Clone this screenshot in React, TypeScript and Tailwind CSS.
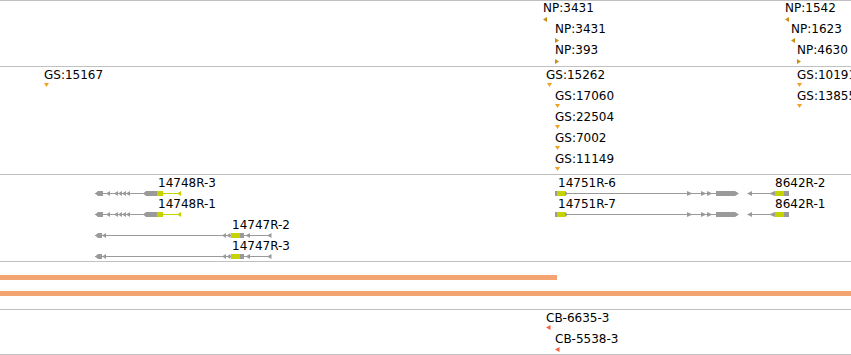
import React from "react";

const GRAY = "#9a9a9a";
const YEL = "#c5d300";
const NPC = "#c98e12";
const GSC = "#f2a322";
const CBC = "#f2623e";

type Lab = { x: number; b: number; t: string };

function Labels({ items, top }: { items: Lab[]; top: number }) {
  return (
    <>
      {items.map((l, i) => (
        <span
          key={i}
          className="absolute whitespace-nowrap text-[12px] leading-[14px] text-black font-['DejaVu_Sans',sans-serif]"
          style={{ left: l.x, top: l.b - 11 - (top + 1) }}
        >
          {l.t}
        </span>
      ))}
    </>
  );
}

function Canvas({ top, h, children }: { top: number; h: number; children: React.ReactNode }) {
  return (
    <svg
      className="absolute left-0 top-[-1px]"
      width={851}
      height={h}
      viewBox={`0 ${top} 851 ${h}`}
    >
      {children}
    </svg>
  );
}

const lt = (x: number, y: number, c: string, w = 4, h = 5) => (
  <polygon points={`${x},${y + h / 2} ${x + w},${y} ${x + w},${y + h}`} fill={c} />
);
const rt = (x: number, y: number, c: string, w = 4, h = 5) => (
  <polygon points={`${x},${y} ${x},${y + h} ${x + w},${y + h / 2}`} fill={c} />
);
const dt = (x: number, y: number, c: string) => (
  <polygon points={`${x},${y} ${x + 5},${y} ${x + 2.5},${y + 4}`} fill={c} />
);

function GeneA({ c }: { c: number }) {
  const t = c - 2.5;
  return (
    <g>
      <rect x={95} y={c - 0.5} width={62} height={1} fill={GRAY} />
      <polygon points={`95,${c} 98,${t} 103,${t} 103,${t + 5} 98,${t + 5}`} fill={GRAY} />
      {[106, 114, 118, 122, 126].map((x) => (
        <React.Fragment key={x}>{lt(x, t, GRAY, 4)}</React.Fragment>
      ))}
      <polygon points={`143,${c} 146,${t} 157,${t} 157,${t + 5} 146,${t + 5}`} fill={GRAY} />
      <rect x={157} y={t} width={6} height={5} fill={YEL} />
      <rect x={163} y={c - 0.5} width={18} height={1} fill={YEL} />
      {lt(177, t, YEL, 4)}
    </g>
  );
}

function GeneB({ c }: { c: number }) {
  const t = c - 2.5;
  return (
    <g>
      <rect x={95} y={c - 0.5} width={176} height={1} fill={GRAY} />
      <polygon points={`95,${c} 98,${t} 102,${t} 102,${t + 5} 98,${t + 5}`} fill={GRAY} />
      {lt(102, t, GRAY, 4)}
      {lt(222, t, GRAY, 4)}
      {lt(226.5, t, GRAY, 4)}
      <rect x={231} y={t} width={9} height={5} fill={YEL} />
      <rect x={240} y={t} width={4} height={5} fill={GRAY} />
      {lt(245.5, t, GRAY, 4.5)}
      {lt(267, t, GRAY, 4.5)}
    </g>
  );
}

function GeneC({ c }: { c: number }) {
  const t = c - 2.5;
  return (
    <g>
      <rect x={567} y={c - 0.5} width={150} height={1} fill={GRAY} />
      <rect x={555} y={t} width={2} height={5} fill={GRAY} />
      <rect x={557} y={t} width={8} height={5} fill={YEL} />
      {rt(565, t, GRAY, 3)}
      {rt(687, t, GRAY, 5.5)}
      {rt(701, t, GRAY, 5.5)}
      {rt(707, t, GRAY, 5.5)}
      <polygon points={`716,${t} 735,${t} 739,${c} 735,${t + 5} 716,${t + 5}`} fill={GRAY} />
      {lt(747, t, GRAY, 5)}
      <rect x={748} y={c - 0.5} width={27} height={1} fill={GRAY} />
      {lt(769, t, GRAY, 6)}
      <rect x={775} y={t} width={9} height={5} fill={YEL} />
      <rect x={784} y={t} width={5} height={5} fill={GRAY} />
    </g>
  );
}

export default function App() {
  const np: Lab[] = [
    { x: 543, b: 12, t: "NP:3431" },
    { x: 555, b: 33, t: "NP:3431" },
    { x: 555, b: 54, t: "NP:393" },
    { x: 785, b: 12, t: "NP:1542" },
    { x: 791, b: 33, t: "NP:1623" },
    { x: 797, b: 54, t: "NP:4630" },
  ];
  const gs: Lab[] = [
    { x: 44, b: 79, t: "GS:15167" },
    { x: 546, b: 79, t: "GS:15262" },
    { x: 555, b: 100, t: "GS:17060" },
    { x: 555, b: 121, t: "GS:22504" },
    { x: 555, b: 142, t: "GS:7002" },
    { x: 555, b: 163, t: "GS:11149" },
    { x: 797, b: 79, t: "GS:10191" },
    { x: 797, b: 100, t: "GS:13855" },
  ];
  const genes: Lab[] = [
    { x: 158, b: 187, t: "14748R-3" },
    { x: 158, b: 208, t: "14748R-1" },
    { x: 232, b: 229, t: "14747R-2" },
    { x: 232, b: 250, t: "14747R-3" },
    { x: 558, b: 187, t: "14751R-6" },
    { x: 558, b: 208, t: "14751R-7" },
    { x: 775, b: 187, t: "8642R-2" },
    { x: 775, b: 208, t: "8642R-1" },
  ];
  const cb: Lab[] = [
    { x: 546, b: 322, t: "CB-6635-3" },
    { x: 555, b: 343, t: "CB-5538-3" },
  ];

  return (
    <div className="w-[851px] h-[355px] overflow-hidden bg-white">
      <div className="relative h-[66px] border-t border-[#c0c0c0]">
        <Canvas top={0} h={66}>
          {lt(543, 17, NPC)}
          {rt(555, 38, NPC)}
          {rt(555, 59, NPC)}
          {lt(785, 17, NPC)}
          {lt(791, 38, NPC)}
          {rt(797, 59, NPC)}
        </Canvas>
        <Labels items={np} top={0} />
      </div>
      <div className="relative h-[108px] border-t border-[#c0c0c0]">
        <Canvas top={66} h={108}>
          {dt(44, 83, GSC)}
          {dt(547, 83, GSC)}
          {dt(555, 104, GSC)}
          {dt(555, 125, GSC)}
          {dt(555, 146, GSC)}
          {dt(555, 167, GSC)}
          {dt(797, 83, GSC)}
          {dt(797, 104, GSC)}
        </Canvas>
        <Labels items={gs} top={66} />
      </div>
      <div className="relative h-[87px] border-t border-[#c0c0c0]">
        <Canvas top={174} h={87}>
          <GeneA c={193.5} />
          <GeneA c={214.5} />
          <GeneB c={235.5} />
          <GeneB c={256.5} />
          <GeneC c={193.5} />
          <GeneC c={214.5} />
        </Canvas>
        <Labels items={genes} top={174} />
      </div>
      <div className="h-[48px] border-t border-[#c0c0c0] pt-[13px] flex flex-col gap-[11px]">
        <div className="w-[557px] h-[5px] bg-[#f4a470]" />
        <div className="w-full h-[5px] bg-[#f4a470]" />
      </div>
      <div className="relative h-[46px] border-y border-[#c0c0c0]">
        <Canvas top={309} h={46}>
          {lt(546, 325, CBC, 4.5, 5)}
          {lt(555, 347, CBC, 4.5, 5)}
        </Canvas>
        <Labels items={cb} top={309} />
      </div>
    </div>
  );
}
